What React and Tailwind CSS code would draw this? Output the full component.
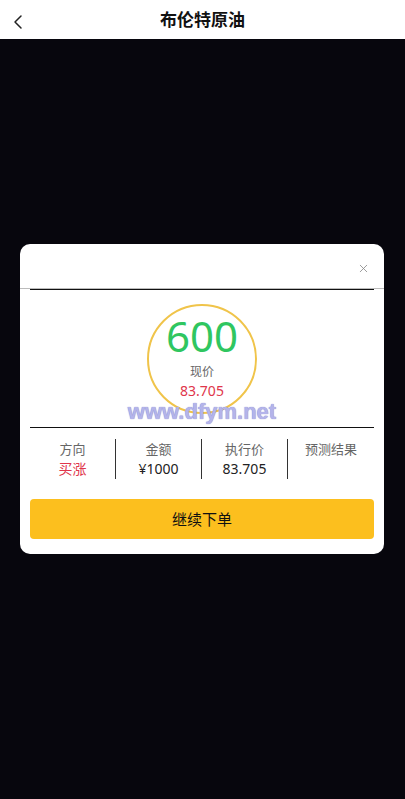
import { ChevronLeft, X } from 'lucide-react';

const FONT = { fontFamily: '"Noto Sans", "Noto Sans CJK SC", sans-serif' };

const COLS = [
  { label: '方向', value: '买涨', red: true },
  { label: '金额', value: '¥1000' },
  { label: '执行价', value: '83.705' },
  { label: '预测结果', value: '' },
];

export default function App() {
  return (
    <div className="flex min-h-[799px] flex-col bg-[#07060d]" style={FONT}>
      {/* top bar */}
      <div className="relative flex h-[39px] items-center justify-center bg-white">
        <ChevronLeft className="absolute left-[6px] top-[10px] h-6 w-6 text-[#222]" strokeWidth={1.5} />
        <h1 className="text-[17px] font-bold text-[#111]">布伦特原油</h1>
      </div>

      <div className="pl-5 pr-[21px] pt-[205px]">
        <div className="rounded-[10px] bg-white pb-[15px]">
          <div className="flex h-[45px] items-center justify-end border-b border-[#bbb] pr-[14px] pt-[4px]">
            <X className="h-[13px] w-[13px] text-[#888]" strokeWidth={1.5} />
          </div>

          <div className="relative mx-[10px] border-t border-[#111]">
            <div className="flex justify-center pt-[14px]">
              <div className="flex h-[110px] w-[110px] flex-col items-center rounded-full border-2 border-[#f0c44a]">
                <div className="mt-[6px] text-[42px] leading-[48px] text-[#2fc660]">600</div>
                <div className="mt-[4px] text-[12px] leading-[16px] text-[#666]">现价</div>
                <div className="mt-[2px] text-[14px] leading-[18px] text-[#e0364b]">83.705</div>
              </div>
            </div>
            <div
              className="absolute left-0 right-0 top-[109px] text-center text-[22px] font-bold leading-[26px] text-[#b4b4ea]"
              style={{ fontFamily: '"Liberation Sans", sans-serif', textShadow: '0 0 1px #7070c0' }}
            >
              www.dfym.net
            </div>

            <div className="mt-[13px] border-t border-[#111]" />

            <div className="mt-[11px] grid grid-cols-4">
              {COLS.map((c, i) => (
                <div
                  key={c.label}
                  className={`flex h-[40px] flex-col items-center ${i < 3 ? 'border-r border-[#333]' : ''}`}
                >
                  <div className="text-[13px] leading-[20px] text-[#666]">{c.label}</div>
                  <div className={`text-[14px] leading-[20px] ${c.red ? 'text-[#e0364b]' : 'text-[#222]'}`}>
                    {c.value}
                  </div>
                </div>
              ))}
            </div>

            <button
              type="button"
              className="mt-[20px] flex h-[40px] w-full items-center justify-center rounded-[4px] bg-[#fcbf1e] text-[15px] text-[#111]"
            >
              继续下单
            </button>
          </div>
        </div>
      </div>
    </div>
  );
}
